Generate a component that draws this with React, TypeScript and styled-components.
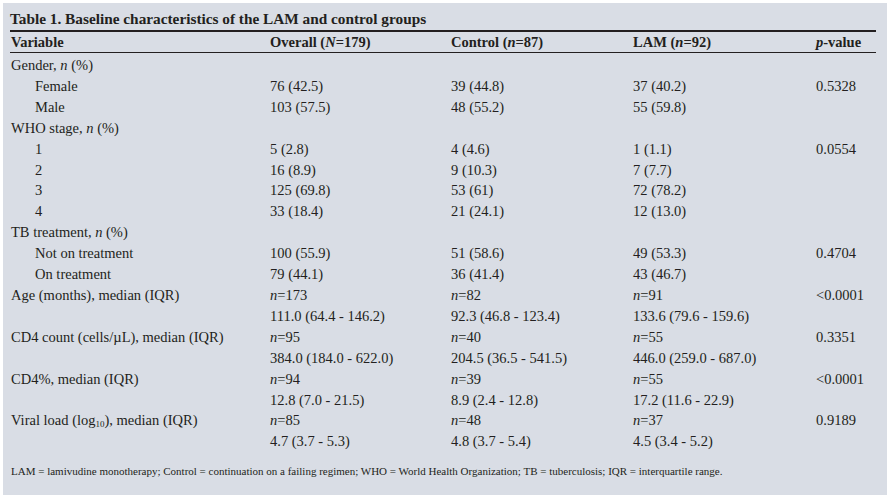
import React from "react";
import styled, { createGlobalStyle } from "styled-components";

const INK = "#231f20";

const GlobalStyle = createGlobalStyle`
  html, body {
    margin: 0;
    background: #ffffff;
  }
  body {
    font-family: "Liberation Serif", "Times New Roman", serif;
    color: ${INK};
  }
`;

const Panel = styled.div`
  box-sizing: border-box;
  margin: 3px 0 0 3px;
  width: 884px;
  height: 492px;
  background: #d9dde5;
  padding: 6px 11px 0 7px;
`;

const Title = styled.div`
  font-size: 15.3px;
  font-weight: bold;
  line-height: 20px;
  height: 21px;
`;

const Table = styled.table`
  width: 866px;
  border-collapse: collapse;
  table-layout: fixed;
  border-top: 2px solid ${INK};
  font-size: 14.5px;
`;

const Head = styled.th`
  text-align: left;
  font-weight: bold;
  padding: 0 0 0 1px;
  height: 20px;
  line-height: 20px;
  white-space: nowrap;
  border-bottom: 1px solid ${INK};
`;

const BodyRow = styled.tr<{ $first?: boolean }>`
  td {
    padding-top: ${({ $first }) => ($first ? "2px" : "0")};
  }
`;

const Cell = styled.td<{ $indent?: boolean }>`
  padding: 0 0 0 ${({ $indent }) => ($indent ? "25px" : "1px")};
  height: 20.9px;
  line-height: 20.9px;
  white-space: nowrap;
  vertical-align: middle;
`;

const Sub = styled.sub`
  font-size: 9px;
  line-height: 0;
  vertical-align: -2px;
`;

const Footnote = styled.div`
  margin-top: 13px;
  font-size: 11px;
  white-space: nowrap;
  padding-left: 1px;
`;

type Row = {
  label: React.ReactNode;
  indent?: boolean;
  cells?: React.ReactNode[];
};

const N = ({ v }: { v: string }) => (
  <>
    <i>n</i>={v}
  </>
);

const ROWS: Row[] = [
  { label: <>Gender, <i>n</i> (%)</> },
  { label: "Female", indent: true, cells: ["76 (42.5)", "39 (44.8)", "37 (40.2)", "0.5328"] },
  { label: "Male", indent: true, cells: ["103 (57.5)", "48 (55.2)", "55 (59.8)", ""] },
  { label: <>WHO stage, <i>n</i> (%)</> },
  { label: "1", indent: true, cells: ["5 (2.8)", "4 (4.6)", "1 (1.1)", "0.0554"] },
  { label: "2", indent: true, cells: ["16 (8.9)", "9 (10.3)", "7 (7.7)", ""] },
  { label: "3", indent: true, cells: ["125 (69.8)", "53 (61)", "72 (78.2)", ""] },
  { label: "4", indent: true, cells: ["33 (18.4)", "21 (24.1)", "12 (13.0)", ""] },
  { label: <>TB treatment, <i>n</i> (%)</> },
  { label: "Not on treatment", indent: true, cells: ["100 (55.9)", "51 (58.6)", "49 (53.3)", "0.4704"] },
  { label: "On treatment", indent: true, cells: ["79 (44.1)", "36 (41.4)", "43 (46.7)", ""] },
  { label: "Age (months), median (IQR)", cells: [<N v="173" />, <N v="82" />, <N v="91" />, "<0.0001"] },
  { label: "", cells: ["111.0 (64.4 - 146.2)", "92.3 (46.8 - 123.4)", "133.6 (79.6 - 159.6)", ""] },
  { label: "CD4 count (cells/µL), median (IQR)", cells: [<N v="95" />, <N v="40" />, <N v="55" />, "0.3351"] },
  { label: "", cells: ["384.0 (184.0 - 622.0)", "204.5 (36.5 - 541.5)", "446.0 (259.0 - 687.0)", ""] },
  { label: "CD4%, median (IQR)", cells: [<N v="94" />, <N v="39" />, <N v="55" />, "<0.0001"] },
  { label: "", cells: ["12.8 (7.0 - 21.5)", "8.9 (2.4 - 12.8)", "17.2 (11.6 - 22.9)", ""] },
  {
    label: <>Viral load (log<Sub>10</Sub>), median (IQR)</>,
    cells: [<N v="85" />, <N v="48" />, <N v="37" />, "0.9189"],
  },
  { label: "", cells: ["4.7 (3.7 - 5.3)", "4.8 (3.7 - 5.4)", "4.5 (3.4 - 5.2)", ""] },
];

const App: React.FC = () => {
  return (
    <>
      <GlobalStyle />
      <Panel>
        <Title>Table 1. Baseline characteristics of the LAM and control groups</Title>
        <Table>
          <colgroup>
            <col style={{ width: 259 }} />
            <col style={{ width: 181 }} />
            <col style={{ width: 182 }} />
            <col style={{ width: 183 }} />
            <col />
          </colgroup>
          <thead>
            <tr>
              <Head>Variable</Head>
              <Head>
                Overall (<i>N</i>=179)
              </Head>
              <Head>
                Control (<i>n</i>=87)
              </Head>
              <Head>
                LAM (<i>n</i>=92)
              </Head>
              <Head>
                <i>p</i>-value
              </Head>
            </tr>
          </thead>
          <tbody>
            {ROWS.map((row, i) => (
              <BodyRow key={i} $first={i === 0}>
                <Cell $indent={row.indent}>{row.label}</Cell>
                {(row.cells ?? ["", "", "", ""]).map((c, j) => (
                  <Cell key={j}>{c}</Cell>
                ))}
              </BodyRow>
            ))}
          </tbody>
        </Table>
        <Footnote>
          LAM = lamivudine monotherapy; Control = continuation on a failing regimen; WHO = World
          Health Organization; TB = tuberculosis; IQR = interquartile range.
        </Footnote>
      </Panel>
    </>
  );
};

export default App;
